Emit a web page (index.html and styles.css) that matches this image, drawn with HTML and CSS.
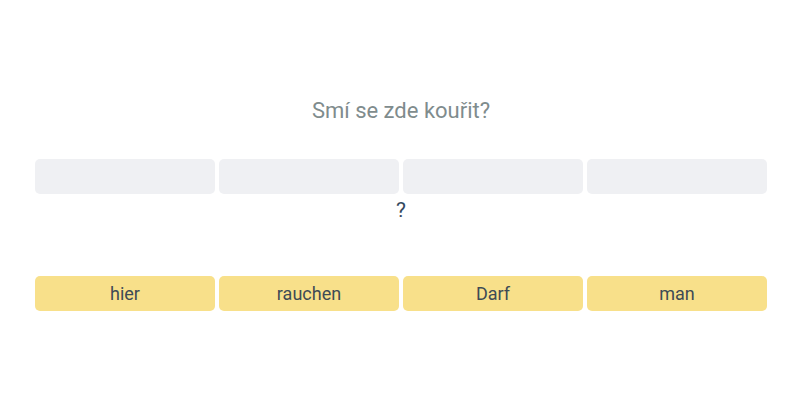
FILE: index.html
```html
<!DOCTYPE html>
<html>
<head>
<meta charset="utf-8">
<link rel="stylesheet" href="styles.css">
</head>
<body>
<div class="wrap">
  <div class="question">Smí se zde kouřit?</div>
  <div class="slots">
    <div class="slot"></div>
    <div class="slot"></div>
    <div class="slot"></div>
    <div class="slot"></div>
  </div>
  <div class="punct">?</div>
  <div class="words">
    <div class="word">hier</div>
    <div class="word">rauchen</div>
    <div class="word">Darf</div>
    <div class="word">man</div>
  </div>
</div>
</body>
</html>
```

FILE: styles.css
```css
html, body {
  margin: 0;
  padding: 0;
  background: #ffffff;
  font-family: Roboto, "Liberation Sans", sans-serif;
}
.wrap {
  width: 732px;
  margin-left: 35px;
  padding-top: 97px;
}
.question {
  text-align: center;
  font-size: 22px;
  line-height: 28px;
  color: #7f8c8d;
}
.slots, .words {
  display: grid;
  grid-template-columns: repeat(4, 180px);
  gap: 4px;
}
.slots {
  margin-top: 34px;
}
.slot {
  height: 35px;
  background: #eff0f3;
  border-radius: 5px;
}
.punct {
  text-align: center;
  font-size: 21px;
  line-height: 32px;
  color: #34495e;
}
.words {
  margin-top: 50px;
}
.word {
  height: 35px;
  background: #f8e08a;
  border-radius: 5px;
  display: flex;
  align-items: center;
  justify-content: center;
  font-size: 18px;
  color: #3e4b55;
}
```
